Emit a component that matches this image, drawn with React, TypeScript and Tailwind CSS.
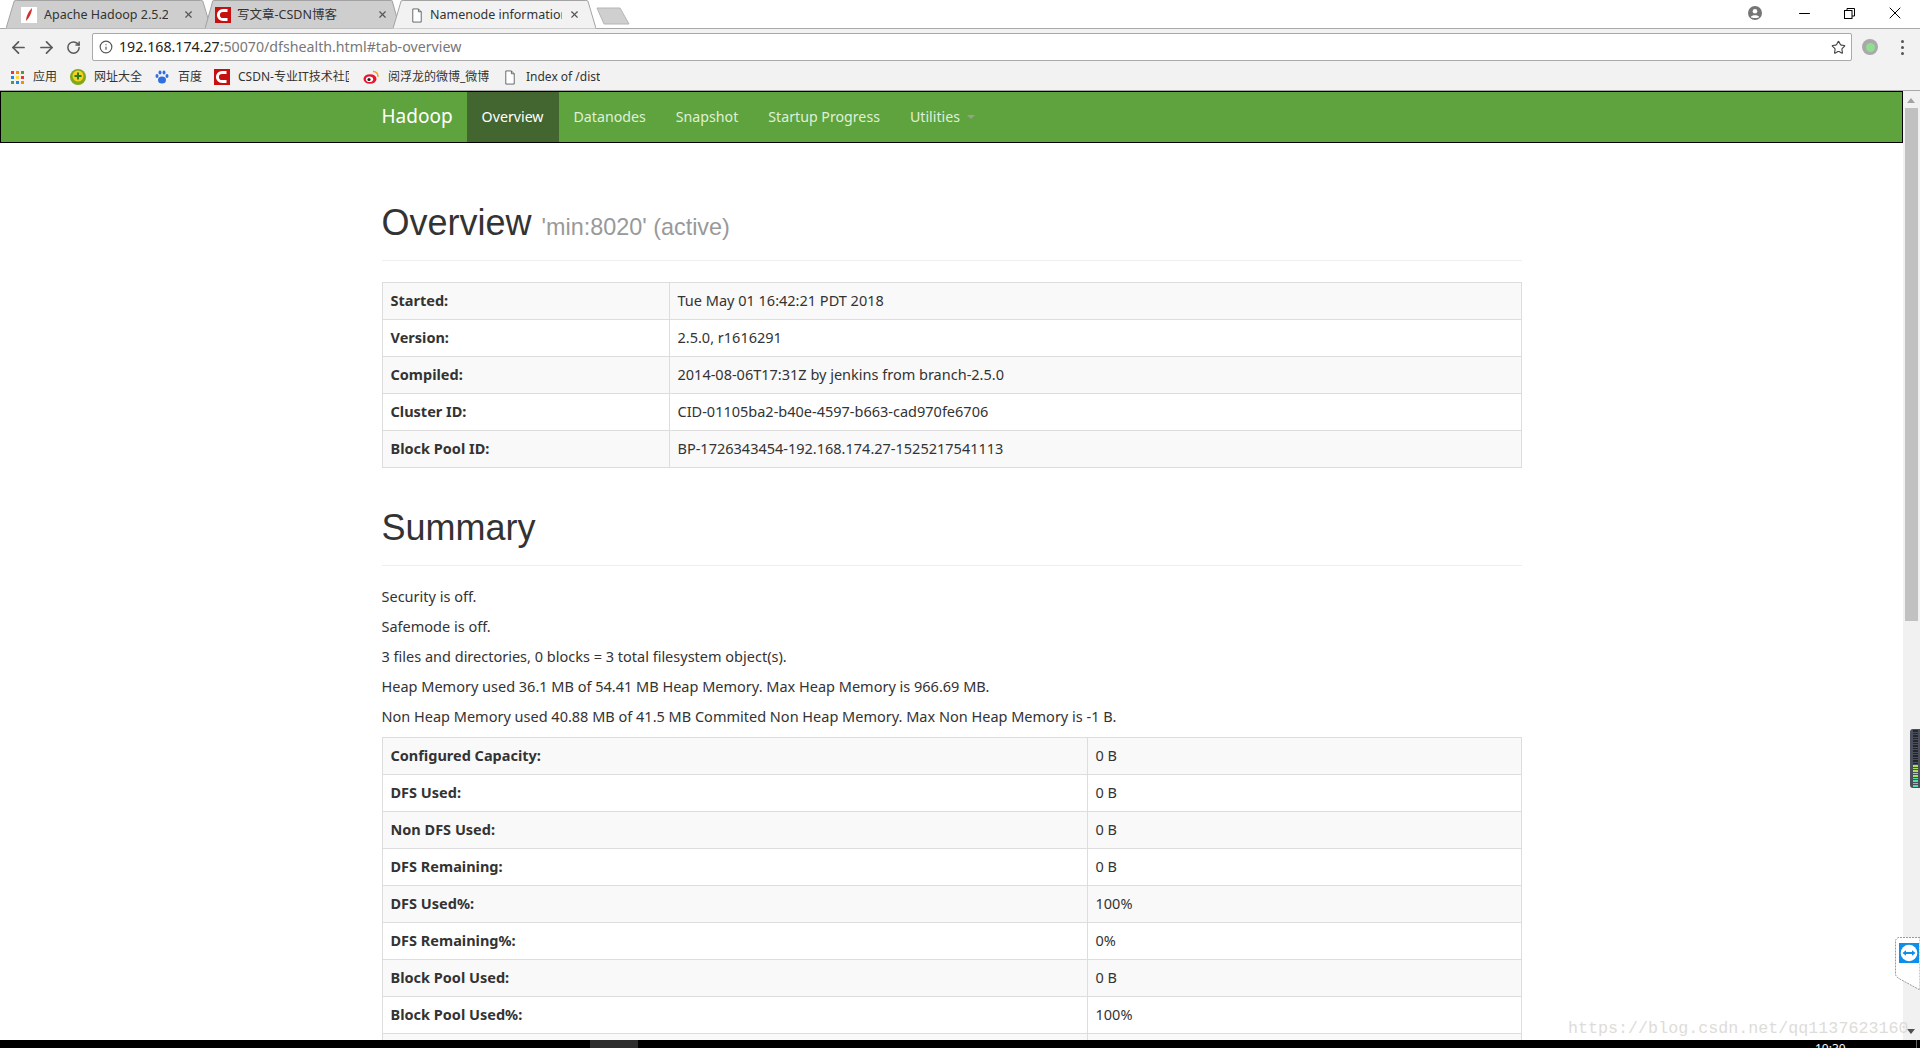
import { ArrowLeft, ArrowRight, RotateCw, Info, Star, X, Minus } from "lucide-react";

const bodyFont = "font-['Noto_Sans','Noto_Sans_CJK_SC',sans-serif]";

function FileIcon({ className }: { className?: string }) {
  return (
    <svg viewBox="0 0 12 16" className={className} fill="none" stroke="#5f6368" strokeWidth="1">
      <path d="M1.5 1h6l3 3v11h-9z" fill="#fff" />
      <path d="M7.5 1v3h3" />
    </svg>
  );
}

function CsdnIcon({ className }: { className?: string }) {
  return (
    <svg viewBox="0 0 16 16" className={className}>
      <rect width="16" height="16" fill="#c70f0f" />
      <path d="M12.5 3.4H8a4.6 4.6 0 0 0 0 9.2h4.5" fill="none" stroke="#fff" strokeWidth="3" />
    </svg>
  );
}

function Tab({
  left,
  width,
  active,
  icon,
  title,
  closeRight,
  textLeft,
  textWidth,
}: {
  left: string;
  width: string;
  active?: boolean;
  icon: React.ReactNode;
  title: string;
  closeRight: string;
  textLeft: string;
  textWidth: string;
}) {
  return (
    <div className={`absolute top-0 h-[29px] ${left} ${width} ${active ? "z-10" : ""}`}>
      <svg viewBox="0 0 200 29" preserveAspectRatio="none" className="absolute inset-0 h-full w-full">
        <path
          d="M0 28.5 L8 1 Q8.3 0.5 10 0.5 H190 Q191.7 0.5 192 1 L200 28.5"
          fill={active ? "#f2f2f2" : "#cecece"}
          stroke="#a3a3a3"
          strokeWidth="1"
          vectorEffect="non-scaling-stroke"
        />
      </svg>
      {icon}
      <span className={`absolute top-[6px] overflow-hidden whitespace-nowrap text-[12.5px] leading-[17px] text-[#333] ${textLeft} ${textWidth}`}>
        {title}
      </span>
      <X className={`absolute top-[9px] h-[11px] w-[11px] text-[#555] ${closeRight}`} strokeWidth={2.5} />
    </div>
  );
}

function Bookmark({ icon, label, width, gap }: { icon: React.ReactNode; label: string; width: string; gap: string }) {
  return (
    <div className={`flex shrink-0 items-center ${width} ${gap}`}>
      <div className="shrink-0">{icon}</div>
      <span className="min-w-0 overflow-hidden whitespace-nowrap text-[12px] text-[#333]">{label}</span>
    </div>
  );
}

function InfoTable({ rows, labelWidth }: { rows: [string, string][]; labelWidth: string }) {
  return (
    <table className="w-full border-collapse border border-[#ddd] text-[14.5px] leading-[20px] text-[#333]">
      <tbody>
        {rows.map(([k, v], i) => (
          <tr key={k + i} className={i % 2 === 0 ? "bg-[#f9f9f9]" : "bg-white"}>
            <th className={`${labelWidth} h-[37px] border border-[#ddd] px-2 pb-[9px] pt-[7px] text-left font-bold`}>{k}</th>
            <td className="h-[37px] border border-[#ddd] px-2 pb-[9px] pt-[7px]">{v}</td>
          </tr>
        ))}
      </tbody>
    </table>
  );
}

const overview: [string, string][] = [
  ["Started:", "Tue May 01 16:42:21 PDT 2018"],
  ["Version:", "2.5.0, r1616291"],
  ["Compiled:", "2014-08-06T17:31Z by jenkins from branch-2.5.0"],
  ["Cluster ID:", "CID-01105ba2-b40e-4597-b663-cad970fe6706"],
  ["Block Pool ID:", "BP-1726343454-192.168.174.27-1525217541113"],
];

const summary: [string, string][] = [
  ["Configured Capacity:", "0 B"],
  ["DFS Used:", "0 B"],
  ["Non DFS Used:", "0 B"],
  ["DFS Remaining:", "0 B"],
  ["DFS Used%:", "100%"],
  ["DFS Remaining%:", "0%"],
  ["Block Pool Used:", "0 B"],
  ["Block Pool Used%:", "100%"],
  ["", ""],
];

const summaryLines = [
  "Security is off.",
  "Safemode is off.",
  "3 files and directories, 0 blocks = 3 total filesystem object(s).",
  "Heap Memory used 36.1 MB of 54.41 MB Heap Memory. Max Heap Memory is 966.69 MB.",
  "Non Heap Memory used 40.88 MB of 41.5 MB Commited Non Heap Memory. Max Non Heap Memory is -1 B.",
];

const appDots = ["#e53935", "#fb8c00", "#43a047", "#1e88e5", "#fdd835", "#e53935", "#43a047", "#1e88e5", "#fb8c00"];

export default function App() {
  return (
    <div className={`${bodyFont} relative flex h-[1048px] w-[1920px] flex-col overflow-hidden bg-white`}>
      {/* window title bar with tabs */}
      <div className="relative h-[29px] shrink-0 border-b border-[#a9a9a9] bg-white">
        <Tab
          left="left-[6px]"
          width="w-[205px]"
          icon={
            <svg viewBox="0 0 16 16" className="absolute left-[15px] top-[7px] h-4 w-4">
              <rect width="16" height="16" fill="#fff" />
              <path d="M11 1 C8 4 5 9 5 14 C8 11 11 6 11 1z" fill="#d0312d" />
            </svg>
          }
          title="Apache Hadoop 2.5.2 -"
          textLeft="left-[38px]"
          textWidth="w-[124px]"
          closeRight="left-[177px]"
        />
        <Tab
          left="left-[205px]"
          width="w-[195px]"
          icon={<CsdnIcon className="absolute left-[10px] top-[7px] h-4 w-4" />}
          title="写文章-CSDN博客"
          textLeft="left-[32px]"
          textWidth="w-[130px]"
          closeRight="left-[172px]"
        />
        <Tab
          left="left-[393px]"
          width="w-[203px]"
          active
          icon={<FileIcon className="absolute left-[18px] top-[8px] h-[15px] w-[12px]" />}
          title="Namenode information"
          textLeft="left-[37px]"
          textWidth="w-[132px]"
          closeRight="left-[176px]"
        />
        <svg viewBox="0 0 34 18" className="absolute left-[596px] top-[7px] h-[18px] w-[34px]">
          <path d="M1 1 H24 L33 17 H8z" fill="#cfcfcf" stroke="#b5b5b5" />
        </svg>
        <svg viewBox="0 0 14 14" className="absolute right-[158px] top-[6px] h-[14px] w-[14px]">
          <circle cx="7" cy="7" r="7" fill="#757575" />
          <circle cx="7" cy="5.2" r="2.3" fill="#fff" />
          <path d="M2.8 11 C3.5 8.8 10.5 8.8 11.2 11 C10 12.4 4 12.4 2.8 11z" fill="#fff" />
        </svg>
        <Minus className="absolute right-[107px] top-[5px] h-[17px] w-[17px] text-black" strokeWidth={1.5} />
        <svg viewBox="0 0 11 11" className="absolute right-[65px] top-[8px] h-[11px] w-[11px]" fill="none" stroke="#000">
          <rect x="0.5" y="2.5" width="7.5" height="8" fill="#fff" />
          <path d="M3 2.5V0.5H10.5V8H8" />
        </svg>
        <X className="absolute right-[15px] top-[3px] h-[20px] w-[20px] text-black" strokeWidth={1.2} />
      </div>

      {/* toolbar */}
      <div className="flex h-[33px] shrink-0 items-center bg-[#f2f2f2] pl-[9px] pt-[3px]">
        <ArrowLeft className="h-[19px] w-[19px] text-[#5a5a5a]" strokeWidth={2.2} />
        <ArrowRight className="ml-[9px] h-[19px] w-[19px] text-[#5a5a5a]" strokeWidth={2.2} />
        <RotateCw className="ml-[10px] h-[15px] w-[15px] text-[#5a5a5a]" strokeWidth={2.4} />
        <div className="ml-[11px] flex h-[28px] w-[1760px] items-center rounded-[2px] border border-[#a9a9a9] bg-white pl-[6px] pr-[5px]">
          <Info className="h-[14px] w-[14px] text-[#555]" strokeWidth={2} />
          <span className="ml-[6px] whitespace-nowrap font-['Noto_Sans',sans-serif] text-[14.2px] text-[#222]">
            192.168.174.27<span className="text-[#777]">:50070/dfshealth.html#tab-overview</span>
          </span>
          <Star className="ml-auto h-[15px] w-[15px] text-[#444]" strokeWidth={1.8} />
        </div>
        <div className="ml-[10px] flex h-4 w-4 items-center justify-center rounded-full bg-[#a9a9a9]">
          <div className="h-[9px] w-[9px] rounded-full bg-[#93dc93]" />
        </div>
        <div className="ml-[23px] flex flex-col gap-[3px]">
          <div className="h-[3px] w-[3px] rounded-full bg-[#555]" />
          <div className="h-[3px] w-[3px] rounded-full bg-[#555]" />
          <div className="h-[3px] w-[3px] rounded-full bg-[#555]" />
        </div>
      </div>

      {/* bookmarks */}
      <div className="flex h-[29px] shrink-0 items-center border-b border-[#a9a9a9] bg-[#f2f2f2] pl-[11px] pt-[2px]">
        <Bookmark
          width="w-[59px]"
          gap="gap-[9px]"
          label="应用"
          icon={
            <div className="grid h-[13px] w-[13px] grid-cols-3 gap-[2px]">
              {appDots.map((c, i) => (
                <div key={i} className="h-[3px] w-[3px]" style={{ backgroundColor: c }} />
              ))}
            </div>
          }
        />
        <Bookmark
          width="w-[84px]"
          gap="gap-[8px]"
          label="网址大全"
          icon={
            <svg viewBox="0 0 16 16" className="h-4 w-4">
              <circle cx="8" cy="8" r="8" fill="#7fa81a" />
              <circle cx="8" cy="7" r="5.5" fill="#f4d21f" />
              <path d="M8 3.5v7M4.5 7h7" stroke="#2d7a1a" strokeWidth="2" />
            </svg>
          }
        />
        <Bookmark
          width="w-[60px]"
          gap="gap-[8px]"
          label="百度"
          icon={
            <svg viewBox="0 0 16 16" className="h-4 w-4" fill="#2f6fe0">
              <ellipse cx="8" cy="11" rx="4" ry="3.6" />
              <ellipse cx="3" cy="7" rx="1.5" ry="2" />
              <ellipse cx="6" cy="3.5" rx="1.5" ry="2" />
              <ellipse cx="10" cy="3.5" rx="1.5" ry="2" />
              <ellipse cx="13" cy="7" rx="1.5" ry="2" />
            </svg>
          }
        />
        <Bookmark
          width="w-[135px]"
          gap="gap-[8px]"
          label="CSDN-专业IT技术社区"
          icon={<CsdnIcon className="h-4 w-4" />}
        />
        <div className="ml-[14px]">
          <Bookmark
            width="w-[141px]"
            gap="gap-[9px]"
            label="阅浮龙的微博_微博"
            icon={
              <svg viewBox="0 0 16 16" className="h-4 w-4">
                <ellipse cx="7" cy="10" rx="6.5" ry="4.8" fill="#e6162d" />
                <ellipse cx="6.5" cy="10.3" rx="3.6" ry="2.8" fill="#fff" />
                <circle cx="6" cy="10.5" r="1.6" fill="#222" />
                <path d="M10 2.5a4.5 4.5 0 0 1 4.8 5.5" fill="none" stroke="#f0a020" strokeWidth="1.4" />
              </svg>
            }
          />
        </div>
        <Bookmark
          width="w-[110px]"
          gap="gap-[10px]"
          label="Index of /dist"
          icon={<FileIcon className="h-[15px] w-[12px]" />}
        />
      </div>

      {/* page and scrollbar */}
      <div className="flex min-h-0 flex-1">
        <div className="min-w-0 flex-1 overflow-hidden">
          <nav className="h-[52px] border border-black bg-[#5fa33e]">
            <div className="mx-auto flex h-full w-[1170px] items-center px-[15px] pb-[1px] text-[14.2px]">
              <span className="pr-[14px] text-[19px] text-white">Hadoop</span>
              <span className="-mb-[1px] flex h-[50px] items-center bg-[#436530] px-[15px] pb-[1px] text-white">Overview</span>
              <span className="px-[15px] text-[#dff0d8]">Datanodes</span>
              <span className="px-[15px] text-[#dff0d8]">Snapshot</span>
              <span className="px-[15px] text-[#dff0d8]">Startup Progress</span>
              <span className="flex items-center pl-[15px] text-[#dff0d8]">
                Utilities
                <span className="ml-[7px] mt-[2px] border-x-[4px] border-t-[4px] border-x-transparent border-t-[#9aa08f]" />
              </span>
            </div>
          </nav>
          <main className="mx-auto w-[1170px] px-[15px] pt-[37px]">
            <div className="h-[81px] border-b border-[#eee] font-['Liberation_Sans',sans-serif] text-[36px] leading-[40px] text-[#333]">
              <h1 className="pt-[23px]">
                Overview <span className="text-[23.4px] text-[#999]">'min:8020' (active)</span>
              </h1>
            </div>
            <div className="mt-[21px]">
              <InfoTable rows={overview} labelWidth="w-[287px]" />
            </div>
            <div className="mt-[40px] h-[58px] border-b border-[#eee] font-['Liberation_Sans',sans-serif] text-[36px] leading-[40px] text-[#333]">
              <h1>Summary</h1>
            </div>
            <div className="mt-[20px] text-[14.5px] leading-[20px] text-[#333]">
              {summaryLines.map((line) => (
                <p key={line} className="mb-[10px]">
                  {line}
                </p>
              ))}
            </div>
            <div className="pt-[1px]">
              <InfoTable rows={summary} labelWidth="w-[705px]" />
            </div>
          </main>
        </div>
        <div className="relative w-[17px] shrink-0 bg-[#f1f1f1]">
          <div className="absolute left-[4px] top-[7px] border-x-[4px] border-b-[5px] border-x-transparent border-b-[#a3a3a3]" />
          <div className="mx-[2px] mt-[17px] h-[513px] bg-[#c1c1c1]" />
          <div className="absolute bottom-[6px] left-[4px] border-x-[4px] border-t-[5px] border-x-transparent border-t-[#505050]" />
        </div>
      </div>

      {/* taskbar */}
      <div className="relative h-[8px] shrink-0 overflow-hidden bg-black">
        <div className="absolute left-[590px] top-0 h-full w-[48px] bg-[#2d2d2d]" />
        <span className="absolute left-[1815px] top-[2px] text-[12px] leading-[14px] text-white">10:30</span>
        <div className="absolute left-[1916px] top-0 h-full w-px bg-[#666]" />
      </div>

      {/* overlays: sound meter, TeamViewer tab, watermark */}
      <div className="absolute left-[1910px] top-[729px] flex h-[59px] w-[10px] flex-col justify-center gap-[1px] rounded-l-[3px] bg-[#4b4f5b] pl-[3px]">
        {Array.from({ length: 23 }).map((_, i) => (
          <div
            key={i}
            className={`h-[1.5px] w-[5px] ${i < 14 ? "bg-[#23262c]" : i < 19 ? "bg-[#a7e05a]" : "bg-[#4de0a8]"}`}
          />
        ))}
      </div>
      <svg viewBox="0 0 25 53" className="absolute left-[1895px] top-[937px] h-[53px] w-[25px]">
        <path d="M25 0.5 H3 L0.5 3 V38 L3 41 L25 53z" fill="#fff" stroke="#999" strokeDasharray="2 1" />
      </svg>
      <svg viewBox="0 0 20 20" className="absolute left-[1899px] top-[943px] h-5 w-5">
        <rect width="20" height="20" fill="#0e8ee9" />
        <circle cx="10" cy="10" r="8.3" fill="#fff" />
        <path d="M3.5 10 L7 7.3 V9 H13 V7.3 L16.5 10 L13 12.7 V11 H7 V12.7z" fill="#0e8ee9" />
      </svg>
      <span className="absolute left-[1568px] top-[1019px] whitespace-nowrap font-['Liberation_Mono',monospace] text-[16.7px] leading-[20px] text-[#dedcd8]">
        https://blog.csdn.net/qq1137623160
      </span>
    </div>
  );
}
